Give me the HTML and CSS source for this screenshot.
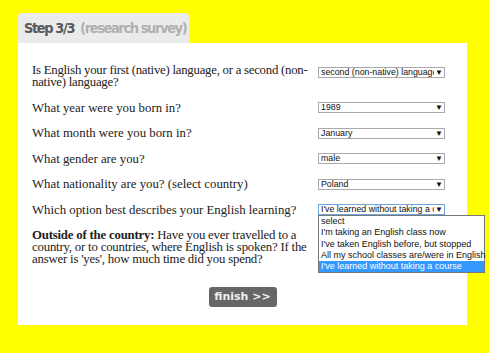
FILE: index.html
```html
<!DOCTYPE html>
<html>
<head>
<meta charset="utf-8">
<link rel="stylesheet" href="styles.css">
</head>
<body>
<div class="page">
  <div class="tab"><span class="step">Step 3/3</span><span class="sub">(research survey)</span></div>
  <div class="card">
    <div class="rows">
      <div class="row two">
        <div class="q">Is English your first (native) language, or a second (non-native) language?</div>
        <div class="sel"><span class="val">second (non-native) language</span><span class="arr">▼</span></div>
      </div>
      <div class="row">
        <div class="q">What year were you born in?</div>
        <div class="sel"><span class="val">1989</span><span class="arr">▼</span></div>
      </div>
      <div class="row">
        <div class="q">What month were you born in?</div>
        <div class="sel"><span class="val">January</span><span class="arr">▼</span></div>
      </div>
      <div class="row">
        <div class="q">What gender are you?</div>
        <div class="sel"><span class="val">male</span><span class="arr">▼</span></div>
      </div>
      <div class="row">
        <div class="q">What nationality are you? (select country)</div>
        <div class="sel"><span class="val">Poland</span><span class="arr">▼</span></div>
      </div>
      <div class="row">
        <div class="q">Which option best describes your English learning?</div>
        <div class="selwrap">
          <div class="sel focus"><span class="val">I've learned without taking a course</span><span class="arr">▼</span></div>
          <ul class="list">
            <li>select</li>
            <li>I'm taking an English class now</li>
            <li>I've taken English before, but stopped</li>
            <li>All my school classes are/were in English</li>
            <li class="hl">I've learned without taking a course</li>
          </ul>
        </div>
      </div>
      <div class="row">
        <div class="q wide"><b>Outside of the country:</b> Have you ever travelled to a country, or to countries, where English is spoken? If the answer is 'yes', how much time did you spend?</div>
      </div>
    </div>
    <div class="actions"><span class="btn">finish &gt;&gt;</span></div>
  </div>
</div>
</body>
</html>
```

FILE: styles.css
```css
html, body {
  margin: 0;
  padding: 0;
  background: #ffff00;
}
.page {
  padding: 13px 0 0 18px;
  width: 449px;
}
.tab {
  width: 165px;
  height: 30px;
  padding-left: 6px;
  background: #ebebeb;
  border-radius: 4px 4px 0 0;
  display: flex;
  align-items: center;
  gap: 6px;
  white-space: nowrap;
  font-family: "DejaVu Sans Condensed", "DejaVu Sans", sans-serif;
  font-weight: bold;
  font-size: 14.5px;
  letter-spacing: -1.4px;
}
.step { color: #595959; }
.sub { color: #b0b0b0; }
.card {
  background: #fff;
  height: 282px;
  box-sizing: border-box;
  padding: 21px 14px 0 14px;
  font-family: "Liberation Serif", Georgia, serif;
  font-size: 12.8px;
  line-height: 12px;
  color: #222;
}
.rows {
  display: flex;
  flex-direction: column;
  gap: 13.5px;
}
.row {
  display: flex;
  align-items: center;
  justify-content: space-between;
}
.row.two { align-items: flex-start; }
.q { width: 282px; }
.row.two .q { letter-spacing: -0.25px; }
.q.wide { width: 284px; letter-spacing: -0.2px; }
.sel {
  width: 125px;
  height: 9px;
  border: 1px solid #a9a9a9;
  display: flex;
  align-items: center;
  justify-content: space-between;
  font-family: "Liberation Sans", Arial, sans-serif;
  font-size: 8.8px;
  line-height: 9px;
  color: #111;
  background: #fff;
  margin-right: 8px;
}
.row.two .sel { margin-top: 3px; }
.val {
  padding-left: 2px;
  white-space: nowrap;
  overflow: hidden;
  flex: 1;
}
.arr {
  font-size: 8px;
  width: 10px;
  text-align: center;
}
.sel.focus { border-color: #6ea6e0; }
.selwrap { position: relative; }
.list {
  position: absolute;
  left: 0;
  top: 11px;
  width: 165px;
  margin: 0;
  padding: 0;
  list-style: none;
  border: 1px solid #777;
  background: #fff;
  font-family: "Liberation Sans", Arial, sans-serif;
  font-size: 9px;
  line-height: 11.3px;
  color: #111;
}
.list li { padding-left: 2px; white-space: nowrap; }
.list li.hl { background: #3399ff; color: #fff; }
.actions {
  display: flex;
  justify-content: center;
  margin-top: 22px;
}
.btn {
  width: 68px;
  height: 20px;
  background: #666;
  color: #f0f0f0;
  border-radius: 3px;
  display: flex;
  align-items: center;
  justify-content: center;
  font-family: "DejaVu Sans", Verdana, sans-serif;
  font-weight: bold;
  font-size: 11px;
}
```
